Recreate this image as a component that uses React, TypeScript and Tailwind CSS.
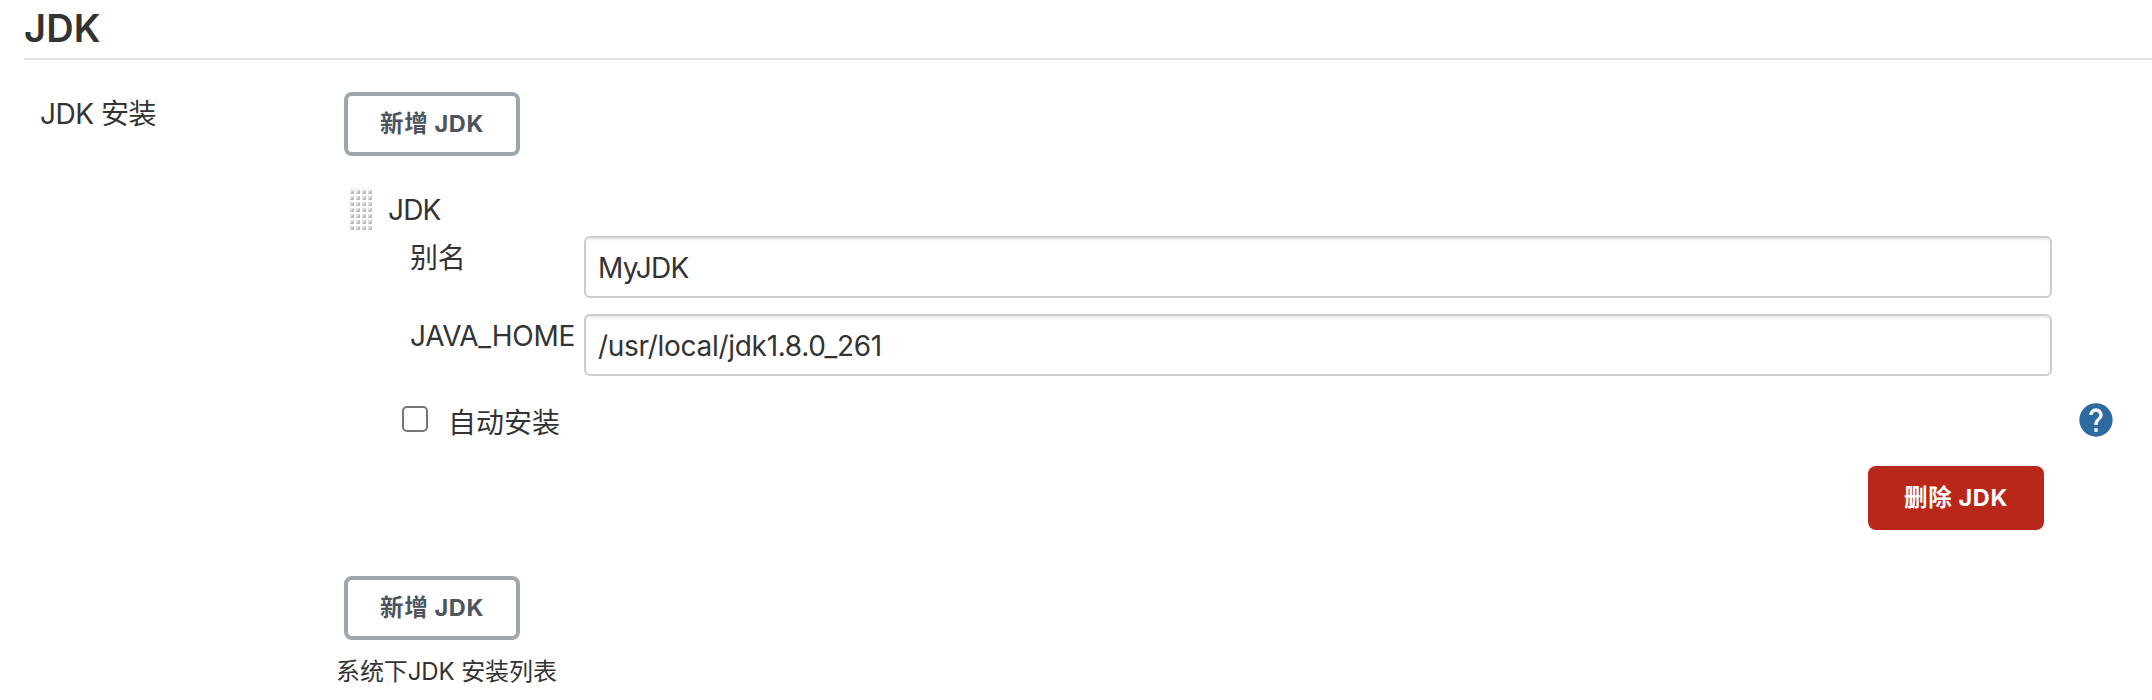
function AddButton() {
  return (
    <button className="flex h-16 w-44 items-center justify-center rounded-[8px] border-4 border-[#9ba7ad] bg-white text-[23.5px] leading-8 font-bold tracking-[0.6px] whitespace-pre text-[#4d545d]">
      新增 JDK
    </button>
  );
}

function DragHandle() {
  const rows = [0, 1, 2, 3, 4, 5, 6];
  const cols = [0, 1, 2, 3];
  return (
    <svg className="mt-[2px] h-[42px] w-[22px]" viewBox="0 0 22 42">
      {cols.map((c) => (
        <rect key={c} x={c * 6} y="0" width="4" height="1" fill="#ededeb" />
      ))}
      {rows.map((r) =>
        cols.map((c) => (
          <g key={`${r}-${c}`}>
            <rect x={c * 6} y={r * 6 + 2} width="4" height="4" fill="#e0e0de" />
            <path d={`M${c * 6} ${r * 6 + 6}L${c * 6 + 4} ${r * 6 + 2}V${r * 6 + 6}Z`} fill="#bcbcba" />
          </g>
        )),
      )}
    </svg>
  );
}

function Field({ label, value, tracking }: { label: string; value: string; tracking: string }) {
  return (
    <div className="flex h-[62px]">
      <label className="w-[174px] shrink-0 pt-[2px] leading-10">{label}</label>
      <input
        type="text"
        defaultValue={value}
        className={`h-[62px] w-[1468px] rounded-[6px] border-2 border-[#cccccc] bg-white px-[12px] pt-[2px] leading-10 shadow-[inset_0_2px_2px_rgba(0,0,0,0.075)] outline-none ${tracking}`}
      />
    </div>
  );
}

export default function App() {
  return (
    <main className="h-[700px] w-[2152px] overflow-hidden bg-white pl-6 font-['Inter','Noto_Sans_CJK_SC',sans-serif] text-[28px] tracking-[-0.3px] text-[#333333]">
      <h1 className="h-[60px] border-b-2 border-[#e0e0e0] pt-[4px] text-[38px] leading-[48px] font-semibold tracking-[0.2px]">JDK</h1>
      <div className="flex pt-8">
        <div className="w-[320px] shrink-0 pt-[2px] pl-4 leading-10 tracking-[-0.5px]">JDK 安装</div>
        <div className="flex flex-col items-start">
          <AddButton />
          <div className="mt-[30px] flex h-[50px] pl-[6px]">
            <DragHandle />
            <div className="pt-[4px] pl-4 leading-10 tracking-[-0.8px]">JDK</div>
          </div>
          <div className="flex flex-col gap-4 pl-[66px]">
            <Field label="别名" value="MyJDK" tracking="tracking-[-0.8px]" />
            <Field label="JAVA_HOME" value="/usr/local/jdk1.8.0_261" tracking="tracking-[-0.3px]" />
          </div>
          <div className="flex h-[90px] w-[1772px] items-start pt-[24px] pl-[58px]">
            <input
              type="checkbox"
              className="mt-[6px] h-[26px] w-[26px] appearance-none rounded-[5px] border-2 border-[#767676] bg-white"
            />
            <label className="pt-[3px] pl-5 leading-10 tracking-normal">自动安装</label>
            <svg className="ml-auto h-10 w-10" viewBox="0 0 24 24" fill="#2d6a9f">
              <path d="M12 2C6.48 2 2 6.48 2 12s4.480 10 10 10 10-4.480 10-10S17.520 2 12 2zm1 17h-2v-2h2v2zm2.070-7.750l-.9.920C13.450 12.900 13 13.500 13 15h-2v-.5c0-1.100.450-2.100 1.170-2.830l1.240-1.260c.370-.360.590-.860.590-1.410 0-1.100-.9-2-2-2s-2 .9-2 2H8c0-2.210 1.790-4 4-4s4 1.790 4 4c0 .880-.360 1.680-.930 2.250z" />
            </svg>
          </div>
          <button className="mb-[46px] ml-[1524px] flex h-16 w-44 items-center justify-center rounded-[8px] bg-[#b9271b] text-[23.5px] leading-8 font-bold tracking-[0.6px] whitespace-pre text-white">
            删除 JDK
          </button>
          <AddButton />
          <div className="-ml-2 pt-[14px] text-[24px] leading-9 tracking-[-0.1px]">系统下JDK 安装列表</div>
        </div>
      </div>
    </main>
  );
}
